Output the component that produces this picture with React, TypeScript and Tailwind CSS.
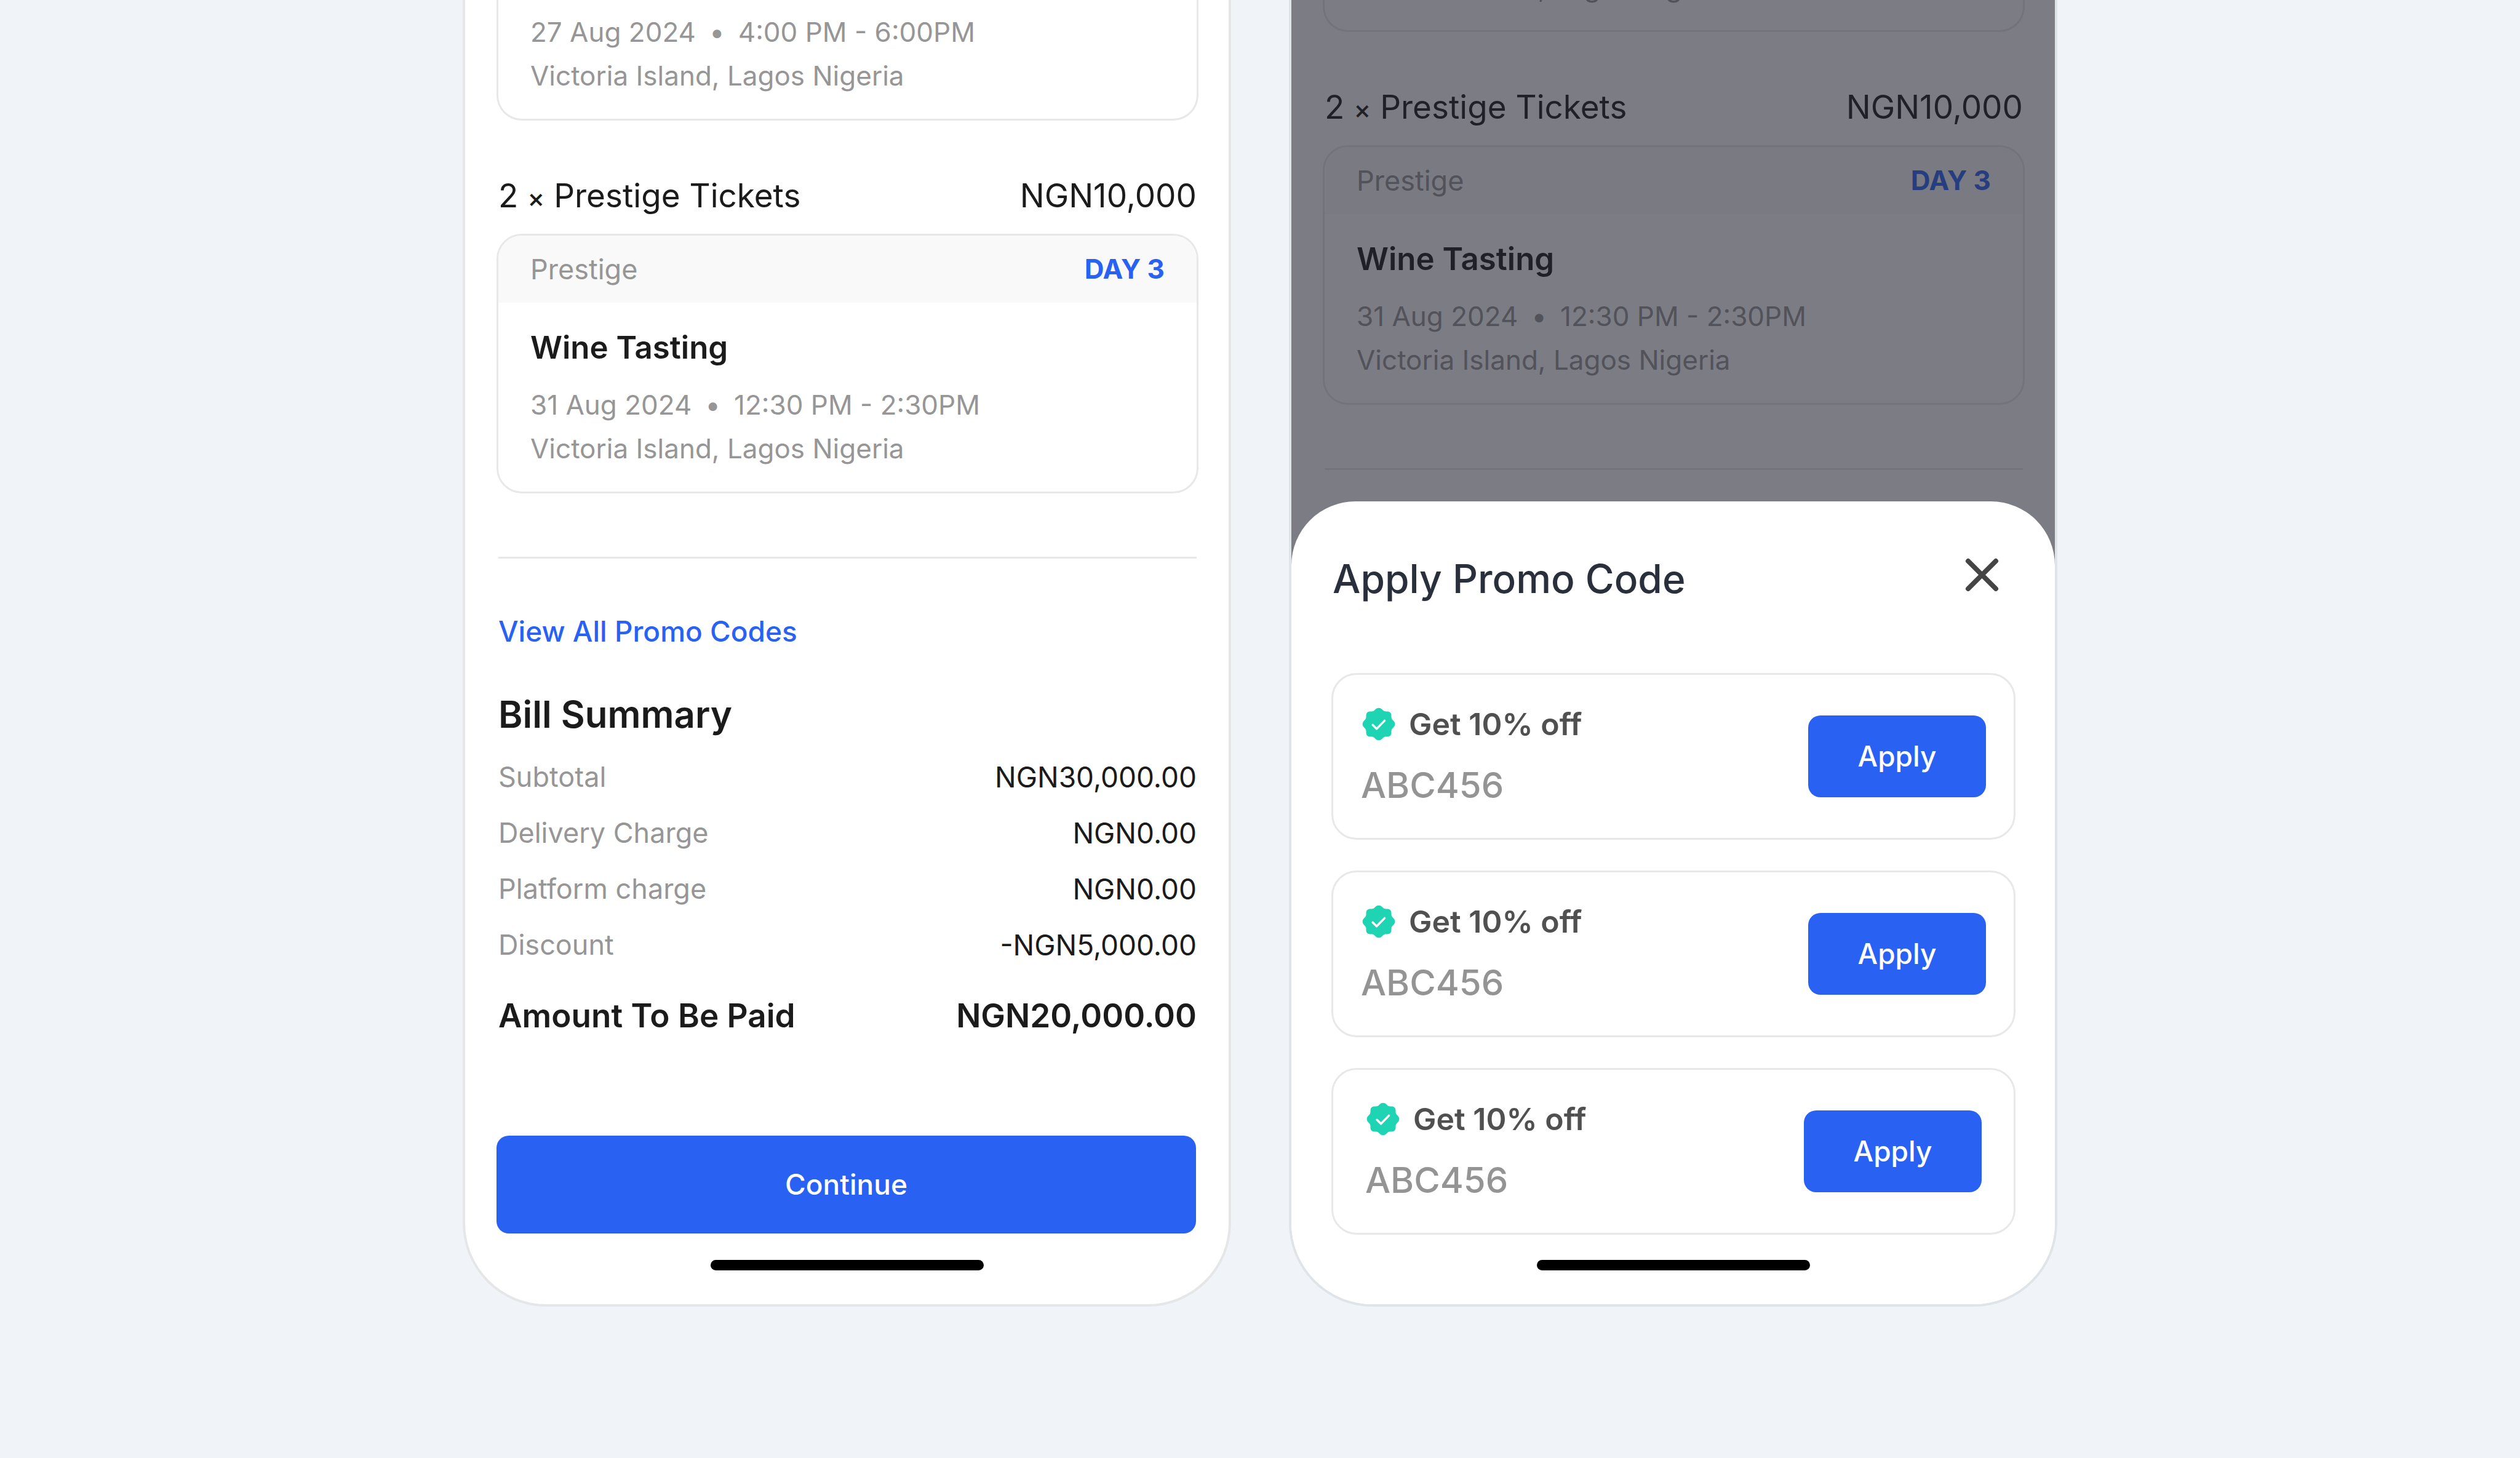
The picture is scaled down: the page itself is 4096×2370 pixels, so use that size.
import type { ReactNode } from "react";

type Charge = { label: string; value: string };

const charges: Charge[] = [
  { label: "Subtotal", value: "NGN30,000.00" },
  { label: "Delivery Charge", value: "NGN0.00" },
  { label: "Platform charge", value: "NGN0.00" },
  { label: "Discount", value: "-NGN5,000.00" },
];

const promos = [
  { id: 1, title: "Get 10% off", code: "ABC456", inset: false },
  { id: 2, title: "Get 10% off", code: "ABC456", inset: false },
  { id: 3, title: "Get 10% off", code: "ABC456", inset: true },
];

function VerifiedBadge() {
  return (
    <svg viewBox="-109 -109 218 218" className="size-[58px] shrink-0" aria-hidden="true">
      <path
        fill="#1ed4b3"
        d="M0-99C8-99 14-96 19-91L24-86C31-79 36-77 45-77L52-77C68-77 77-68 77-52L77-45C77-36 79-31 86-24L91-19C96-14 99-8 99 0C99 8 96 14 91 19L86 24C79 31 77 36 77 45L77 52C77 68 68 77 52 77L45 77C36 77 31 79 24 86L19 91C14 96 8 99 0 99C-8 99-14 96-19 91L-24 86C-31 79-36 77-45 77L-52 77C-68 77-77 68-77 52L-77 45C-77 36-79 31-86 24L-91 19C-96 14-99 8-99 0C-99-8-96-14-91-19L-86-24C-79-31-77-36-77-45L-77-52C-77-68-68-77-52-77L-45-77C-36-77-31-79-24-86L-19-91C-14-96-8-99 0-99Z"
      />
      <path
        d="M-37 5L-13 29L36-21"
        fill="none"
        stroke="#fff"
        strokeWidth="13"
        strokeLinecap="round"
        strokeLinejoin="round"
      />
    </svg>
  );
}

function CloseIcon() {
  return (
    <svg viewBox="0 0 67 67" className="size-[67px]" aria-hidden="true">
      <path
        d="M11 11L56 56M56 11L11 56"
        fill="none"
        stroke="#454545"
        strokeWidth="8"
        strokeLinecap="round"
      />
    </svg>
  );
}

function HomeIndicator() {
  return <div className="mx-auto mb-[55px] h-[17px] w-[444px] shrink-0 rounded-full bg-black" />;
}

function EventDetails({ date, time, place }: { date: string; time: string; place: string }) {
  return (
    <div className="text-[44px] leading-[71px] text-[#969696]">
      <p>
        {date}
        <span className="mx-[22px]">•</span>
        {time}
      </p>
      <p>{place}</p>
    </div>
  );
}

/** The tickets part of the order, shown on both screens. */
function Tickets() {
  return (
    <div className="shrink-0 pr-[49px] pl-[51px]">
      <div className="rounded-b-[41px] border-[3px] border-t-0 border-[#e8e8e8] px-[52px] pt-[28px] pb-[34px]">
        <EventDetails date="27 Aug 2024" time="4:00 PM - 6:00PM" place="Victoria Island, Lagos Nigeria" />
      </div>

      <div className="mt-[86px] flex justify-between px-[3px] text-[53px] leading-[72px]">
        <h2>
          2 <span className="text-[42px] leading-none font-medium">×</span> Prestige Tickets
        </h2>
        <p>NGN10,000</p>
      </div>

      <section className="mt-[26px] overflow-hidden rounded-[41px] border-[3px] border-[#e8e8e8]">
        <div className="flex justify-between bg-[#f9f9f9] px-[52px] py-[19px] leading-[71px]">
          <p className="text-[45px] text-[#969696]">Prestige</p>
          <p className="text-[44px] font-bold text-[#2961f2]">DAY 3</p>
        </div>
        <div className="px-[52px] pt-[43px] pb-[34px]">
          <h3 className="mb-[28px] text-[51px] leading-[60px] font-semibold">Wine Tasting</h3>
          <EventDetails date="31 Aug 2024" time="12:30 PM - 2:30PM" place="Victoria Island, Lagos Nigeria" />
        </div>
      </section>

      <hr className="mx-[3px] mt-[103px] border-t-[3px] border-[#e8e8e8]" />
    </div>
  );
}

function Phone({ border, children }: { border: string; children: ReactNode }) {
  return (
    <div
      className={`relative flex max-w-[1249px] flex-1 flex-col justify-end overflow-hidden rounded-b-[136px] border-[4px] border-t-0 bg-white ${border}`}
    >
      {children}
    </div>
  );
}

function CheckoutScreen() {
  return (
    <Phone border="border-[#e5e6e7]">
      <Tickets />
      <div className="shrink-0 pr-[49px] pl-[51px]">
        <div className="px-[3px]">
          <a href="#promo" className="mt-[88px] block w-fit text-[46px] leading-[60px] font-medium text-[#2961f2]">
            View All Promo Codes
          </a>
          <h2 className="mt-[69px] text-[60px] leading-[72px] font-semibold">Bill Summary</h2>
          <dl className="mt-[36px] flex flex-col gap-[31px] leading-[60px]">
            {charges.map((c) => (
              <div key={c.label} className="flex justify-between">
                <dt className="text-[45px] text-[#969696]">{c.label}</dt>
                <dd className="text-[46px]">{c.value}</dd>
              </div>
            ))}
          </dl>
          <div className="mt-[55px] flex justify-between text-[53px] leading-[60px] font-semibold">
            <p>Amount To Be Paid</p>
            <p>NGN20,000.00</p>
          </div>
        </div>
        <div className="pt-[165px] pr-[4px] pb-[43px]">
          <button
            type="button"
            className="block h-[159px] w-full rounded-[20px] bg-[#2961f2] text-[46px] font-medium text-white"
          >
            Continue
          </button>
        </div>
      </div>
      <HomeIndicator />
    </Phone>
  );
}

function PromoScreen() {
  return (
    <Phone border="border-[#dfe4e9]">
      <Tickets />
      <div className="absolute inset-x-0 top-0 bottom-1/4 bg-[#252532]/60" />

      <section
        id="promo"
        aria-labelledby="promo-title"
        className="relative mt-[51px] shrink-0 rounded-t-[104px] bg-white pt-[86px]"
      >
        <div className="pr-[64px] pl-[65px]">
          <div className="flex items-start justify-between pr-[21px] pl-[2px]">
            <h2 id="promo-title" className="text-[64px] leading-[80px] font-medium text-[#2a2f3c]">
              Apply Promo Code
            </h2>
            <button type="button" aria-label="Close">
              <CloseIcon />
            </button>
          </div>

          <ul className="mt-[113px] mb-[41px] flex flex-col gap-[50px]">
            {promos.map((p) => (
              <li
                key={p.id}
                className={`flex items-center justify-between rounded-[41px] border-[3px] border-[#e8e8e8] py-[50px] ${
                  p.inset ? "px-[52px]" : "px-[45px]"
                }`}
              >
                <div>
                  <h3 className="flex items-center gap-[20px] text-[50px] leading-[60px] font-semibold text-[#505050]">
                    <VerifiedBadge />
                    {p.title}
                  </h3>
                  <p className="mt-[33px] text-[58px] leading-[72px] font-medium text-[#949494]">{p.code}</p>
                </div>
                <button
                  type="button"
                  className="h-[133px] w-[289px] rounded-[20px] bg-[#2961f2] text-[46px] font-medium text-white"
                >
                  Apply
                </button>
              </li>
            ))}
          </ul>
        </div>
        <HomeIndicator />
      </section>
    </Phone>
  );
}

export default function App() {
  return (
    <main className="flex h-screen justify-center gap-[94px] overflow-hidden bg-[#f0f4f9] pb-[246px] font-['Inter',sans-serif] text-[#1b1b1b]">
      <CheckoutScreen />
      <PromoScreen />
    </main>
  );
}
